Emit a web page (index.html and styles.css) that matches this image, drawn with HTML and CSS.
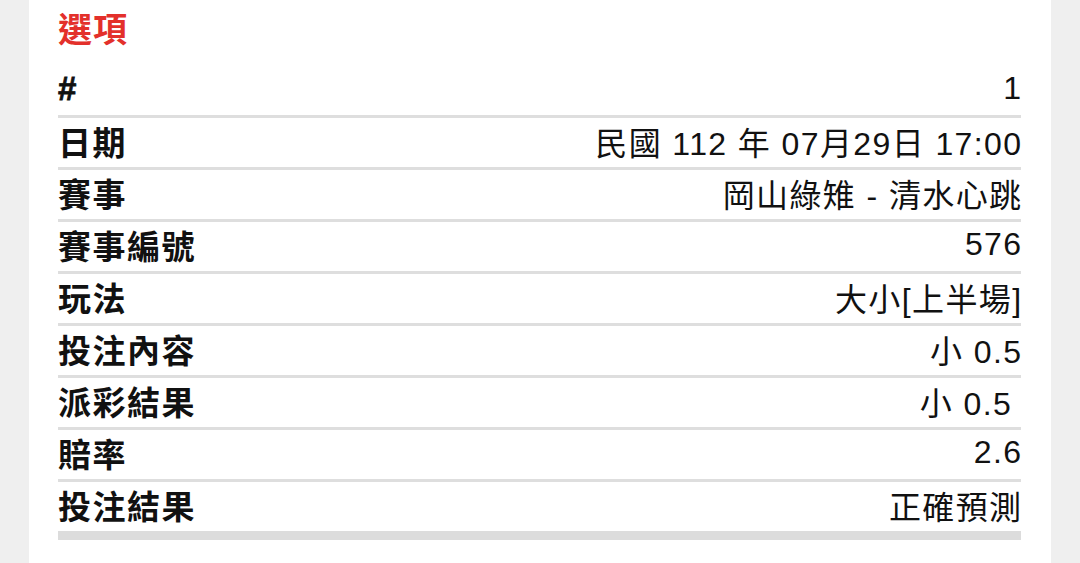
FILE: index.html
```html
<!DOCTYPE html>
<html lang="zh-Hant">
<head>
<meta charset="utf-8">
<title>選項</title>
<link rel="stylesheet" href="styles.css">
</head>
<body>
<div class="card">
  <h2 class="title">選項</h2>
  <div class="list">
    <div class="row"><span class="label hash">#</span><span class="value">1</span></div>
    <div class="row"><span class="label">日期</span><span class="value">民國 112 年 07月29日 17:00</span></div>
    <div class="row"><span class="label">賽事</span><span class="value">岡山綠雉 - 清水心跳</span></div>
    <div class="row"><span class="label">賽事編號</span><span class="value">576</span></div>
    <div class="row"><span class="label">玩法</span><span class="value">大小[上半場]</span></div>
    <div class="row"><span class="label">投注內容</span><span class="value">小 0.5</span></div>
    <div class="row"><span class="label">派彩結果</span><span class="value">小 0.5&nbsp;</span></div>
    <div class="row"><span class="label">賠率</span><span class="value">2.6</span></div>
    <div class="row last"><span class="label">投注結果</span><span class="value">正確預測</span></div>
  </div>
</div>
</body>
</html>
```

FILE: styles.css
```css
html, body {
  margin: 0;
  padding: 0;
  background: #efefef;
  height: 100%;
  overflow: hidden;
}
body {
  font-family: "Liberation Sans", "Noto Sans CJK TC", sans-serif;
  color: #111;
}
.card {
  background: #fff;
  margin: 0 29px;
  padding: 8px 30px 0 29px;
  min-height: 563px;
  box-sizing: border-box;
}
.title {
  margin: 0 0 14px;
  font-size: 34px;
  line-height: 44px;
  font-weight: 700;
  color: #e3302b;
  letter-spacing: 1px;
}
.list {
  display: flex;
  flex-direction: column;
}
.row {
  height: 45px;
  padding-bottom: 4px;
  display: flex;
  align-items: center;
  justify-content: space-between;
  border-bottom: 3px solid #dedede;
  font-size: 32px;
}
.row.last {
  border-bottom: 9px solid #dcdcdc;
}
.label {
  font-size: 33px;
  font-weight: 700;
  letter-spacing: 1.5px;
}
.label.hash {
  font-weight: 900;
  -webkit-text-stroke: 0.8px #111;
}
.value {
  font-weight: 400;
  letter-spacing: 1.4px;
  margin-right: -1.5px;
  white-space: pre;
}
```
